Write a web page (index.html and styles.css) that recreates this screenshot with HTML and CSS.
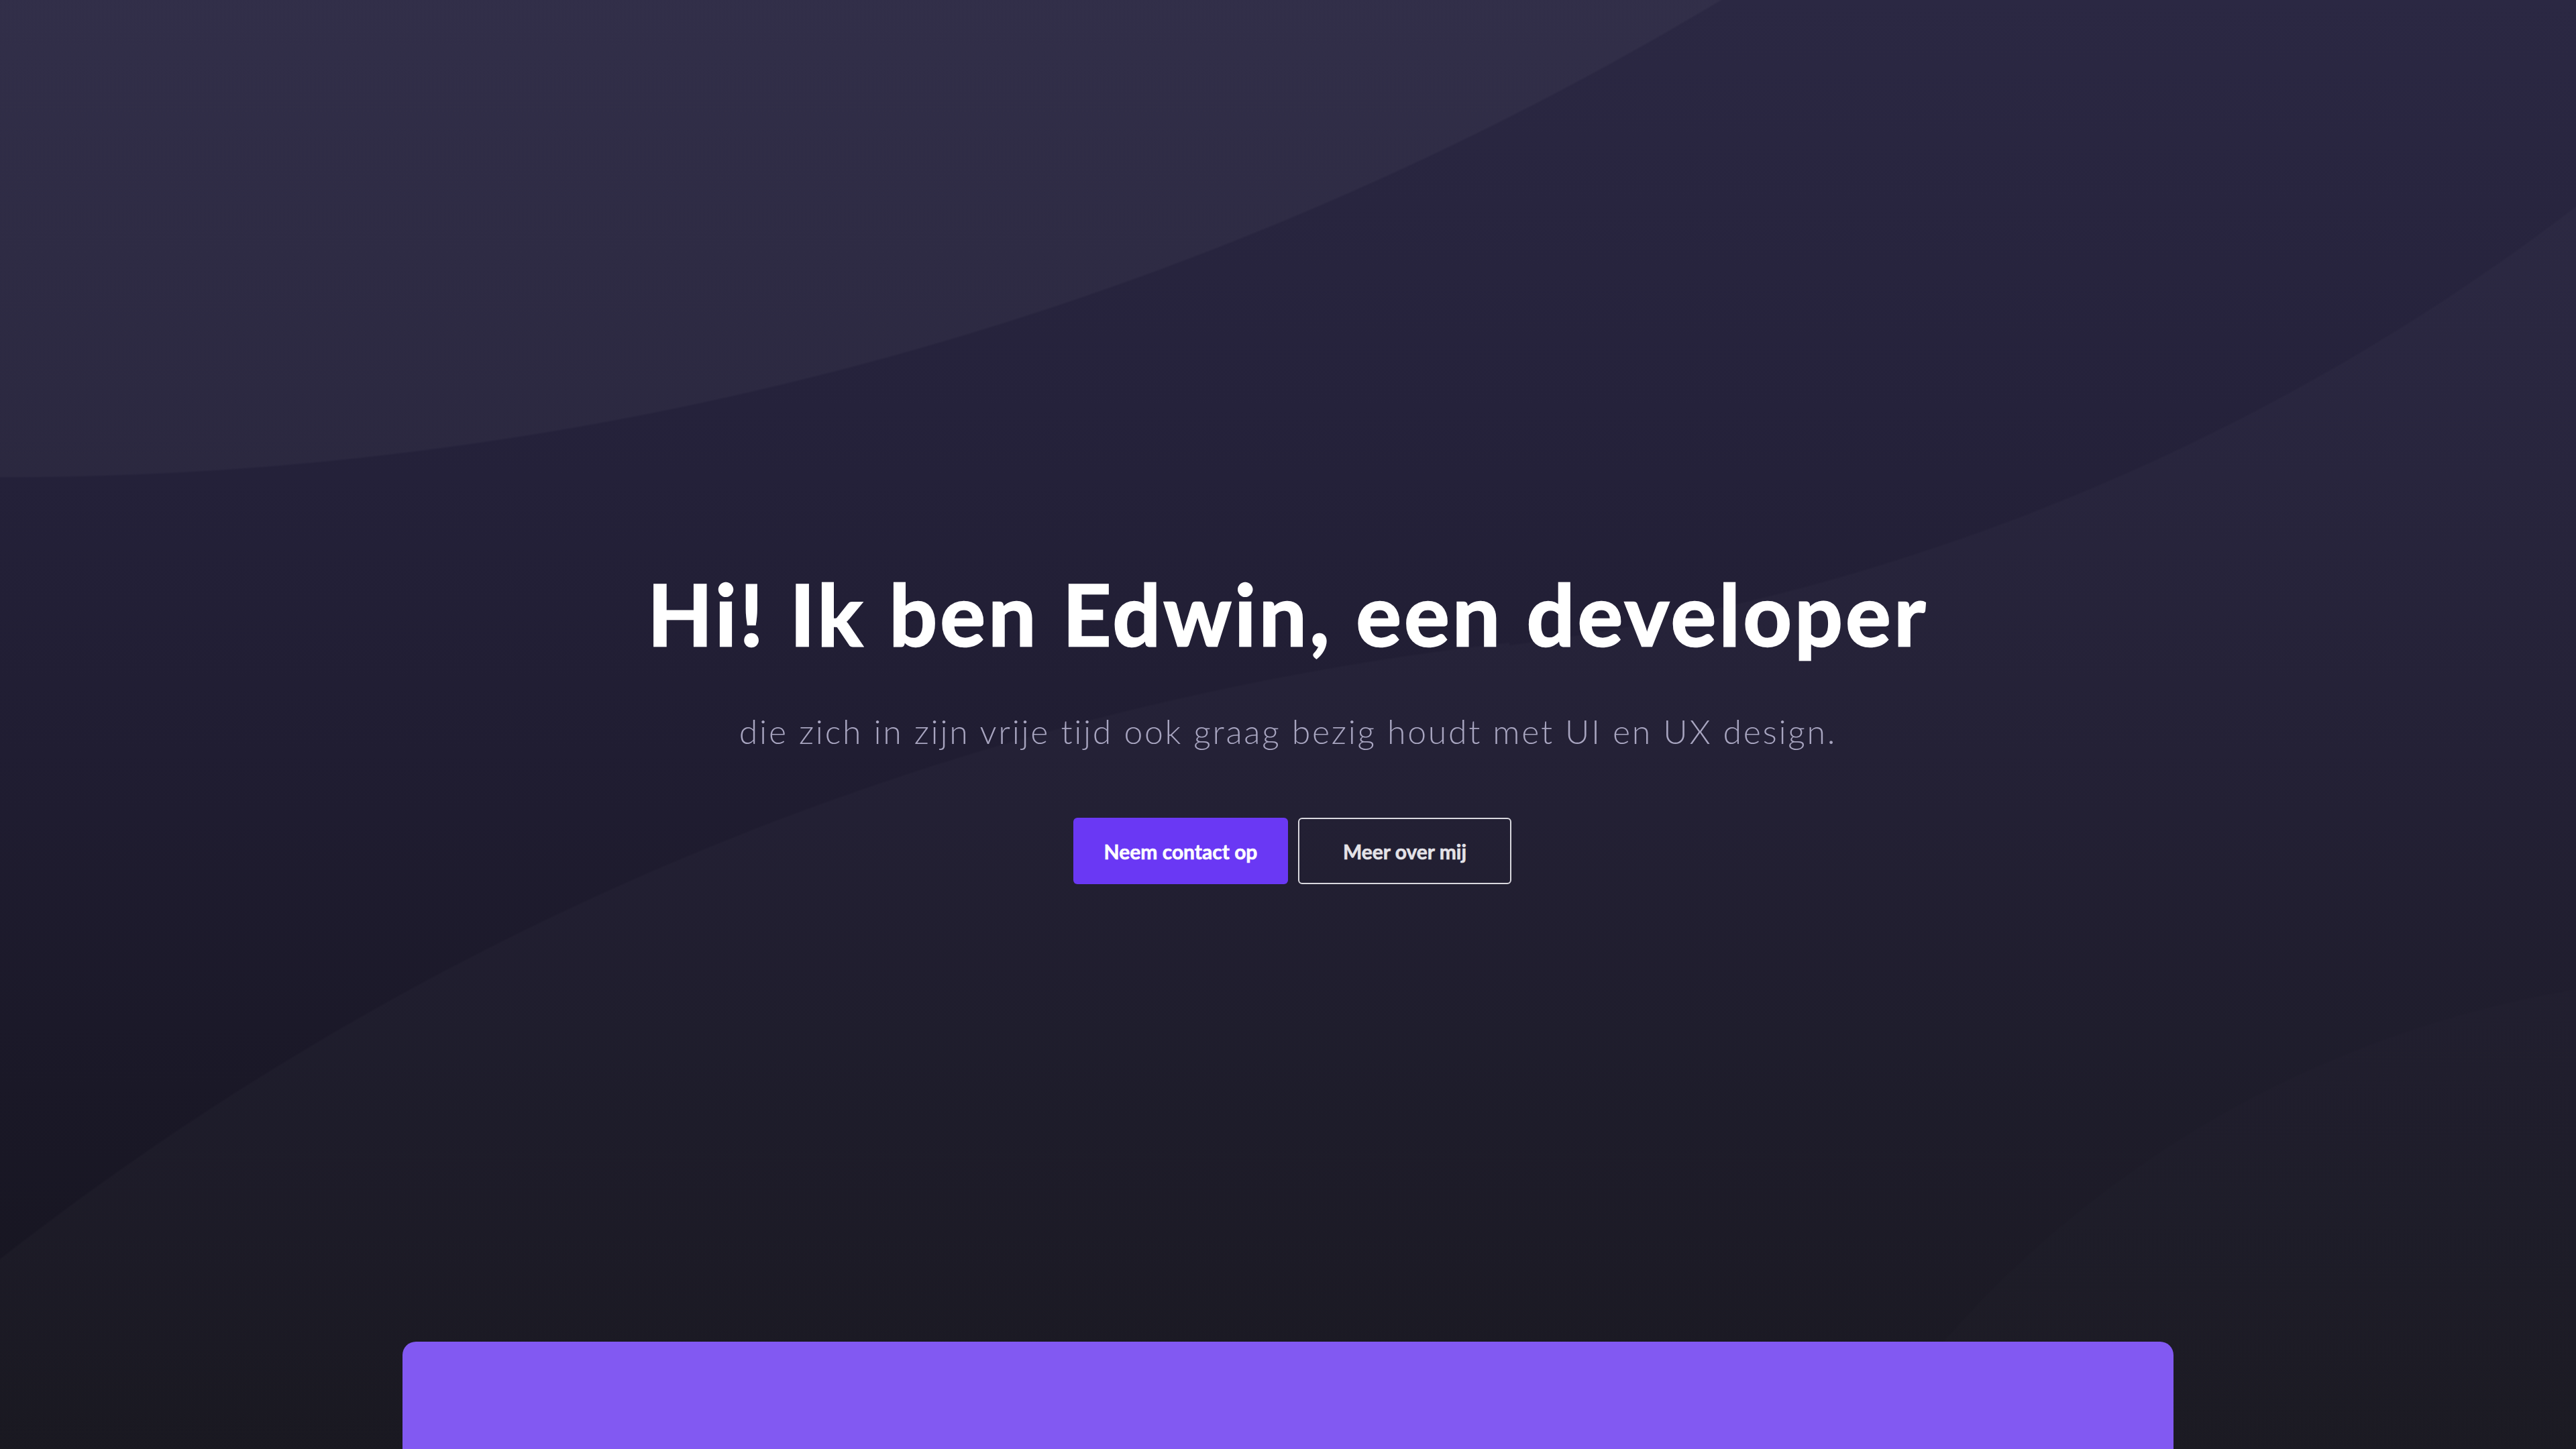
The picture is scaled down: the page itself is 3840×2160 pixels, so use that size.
FILE: index.html
```html
<!DOCTYPE html>
<html lang="nl">
<head>
<meta charset="utf-8">
<title>Edwin - Developer</title>
<link rel="stylesheet" href="styles.css">
</head>
<body>
<div class="page">
  <header class="hero">
    <h1 class="hero-title">Hi! Ik ben Edwin, een developer</h1>
    <p class="hero-sub">die zich in zijn vrije tijd ook graag bezig houdt met UI en UX design.</p>
    <div class="hero-actions">
      <a class="btn btn-primary" href="#contact">Neem contact op</a>
      <a class="btn btn-outline" href="#over">Meer over mij</a>
    </div>
  </header>
  <section class="card-wrap">
    <div class="card"></div>
  </section>
</div>
</body>
</html>
```

FILE: styles.css
```css
* { box-sizing: border-box; }
html, body { margin: 0; padding: 0; }
body {
  background: #16141d;
  font-family: "Lato", "Open Sans", sans-serif;
  color: #ffffff;
}
.page {
  width: 3840px;
  height: 2160px;
  overflow: hidden;
  background:
    radial-gradient(circle at 0px -4270px, rgba(255,255,255,0.032) 4980px, rgba(255,255,255,0) 4983px) 0 0 / 3840px 2160px no-repeat,
    radial-gradient(circle at -417px -2312px, rgba(255,255,255,0) 3299px, rgba(255,255,255,0.02) 3302px) 2250px 0 / 1590px 2160px no-repeat,
    radial-gradient(circle at 2747px 5390px, rgba(255,255,255,0.02) 4458px, rgba(255,255,255,0) 4461px) 0 0 / 2250px 2160px no-repeat,
    radial-gradient(circle at 4100px 3050px, rgba(255,255,255,0.008) 1595px, rgba(255,255,255,0) 1598px) 0 0 / 3840px 2160px no-repeat,
    linear-gradient(180deg, #2b2843 0%, #25223b 28%, #201d32 52%, #1a1827 75%, #15141d 100%);
}
.hero {
  display: flex;
  flex-direction: column;
  align-items: center;
  padding-top: 839px;
  height: 2000px;
}
.hero-title {
  margin: 0;
  font-size: 126px;
  line-height: 1.2;
  font-weight: 700;
  letter-spacing: 4.5px;
  -webkit-text-stroke: 2.5px #ffffff;
  color: #ffffff;
}
.hero-sub {
  margin: 70px 0 0;
  font-size: 50px;
  line-height: 1.2;
  font-weight: 300;
  color: #a8a5c0;
  letter-spacing: 2.7px;
}
.hero-actions {
  display: flex;
  gap: 15px;
  margin-top: 99px;
  padding-left: 13px;
}
.btn {
  display: flex;
  align-items: center;
  justify-content: center;
  height: 99px;
  width: 320px;
  border-radius: 6px;
  font-size: 30px;
  font-weight: 700;
  -webkit-text-stroke: 0.6px currentColor;
  text-decoration: none;
}
.btn-primary {
  background: #6a38f4;
  color: #ffffff;
}
.btn-outline {
  width: 318px;
  border: 2px solid #d9d8de;
  color: #e4e3e8;
}
.card-wrap {
  display: flex;
  justify-content: center;
}
.card {
  width: 2640px;
  height: 400px;
  background: #8259f2;
  border-radius: 20px 20px 0 0;
}
```
